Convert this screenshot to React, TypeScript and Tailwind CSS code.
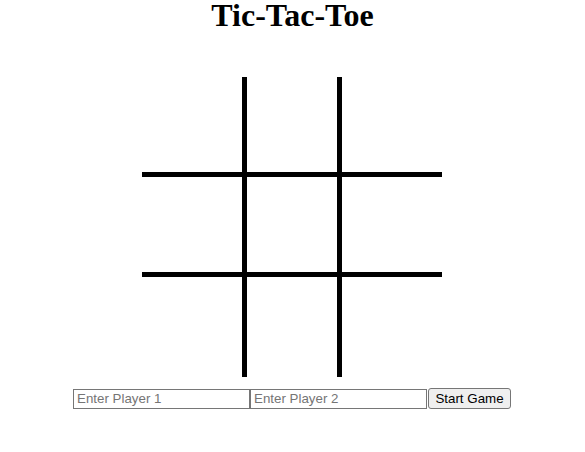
import { useState } from "react";

const cellBorders = [
  "border-b-[5px]",
  "border-b-[5px] border-x-[5px]",
  "border-b-[5px]",
  "border-b-[5px]",
  "border-b-[5px] border-x-[5px]",
  "border-b-[5px]",
  "",
  "border-x-[5px]",
  "",
];

export default function App() {
  const [cells, setCells] = useState<string[]>(Array(9).fill(""));
  const [p1, setP1] = useState("");
  const [p2, setP2] = useState("");

  return (
    <div className="min-h-screen bg-white flex flex-col items-center font-['Liberation_Sans',Arial,sans-serif] text-black">
      <h1 className="m-0 text-[32px] leading-[30px] font-bold font-['Liberation_Serif','Times_New_Roman',serif]">
        Tic-Tac-Toe
      </h1>

      <div className="mt-[47px] mr-px grid grid-cols-[100px_100px_100px] grid-rows-[100px_100px_100px]">
        {cells.map((c, i) => (
          <button
            key={i}
            onClick={() => {
              if (c) return;
              const next = [...cells];
              next[i] = cells.filter(Boolean).length % 2 === 0 ? "X" : "O";
              setCells(next);
            }}
            className={`box-border w-[100px] h-[100px] border-black border-solid bg-white flex items-center justify-center text-5xl font-bold ${cellBorders[i]}`}
          >
            {c}
          </button>
        ))}
      </div>

      <div className="mt-[11px] mr-px flex items-center text-[13.33px]">
        <input
          value={p1}
          onChange={(e) => setP1(e.target.value)}
          placeholder="Enter Player 1"
          className="box-border w-[177px] h-[20px] border border-[#767676] px-[3px] text-[13.33px] placeholder:text-[#757575] outline-none"
        />
        <input
          value={p2}
          onChange={(e) => setP2(e.target.value)}
          placeholder="Enter Player 2"
          className="box-border w-[177px] h-[20px] border border-[#767676] px-[3px] text-[13.33px] placeholder:text-[#757575] outline-none"
        />
        <button
          onClick={() => setCells(Array(9).fill(""))}
          className="box-border ml-px w-[83px] h-[21px] px-[6px] border border-[#767676] rounded-[3px] bg-[#efefef] text-[13.33px] leading-none"
        >
          Start Game
        </button>
      </div>
    </div>
  );
}
